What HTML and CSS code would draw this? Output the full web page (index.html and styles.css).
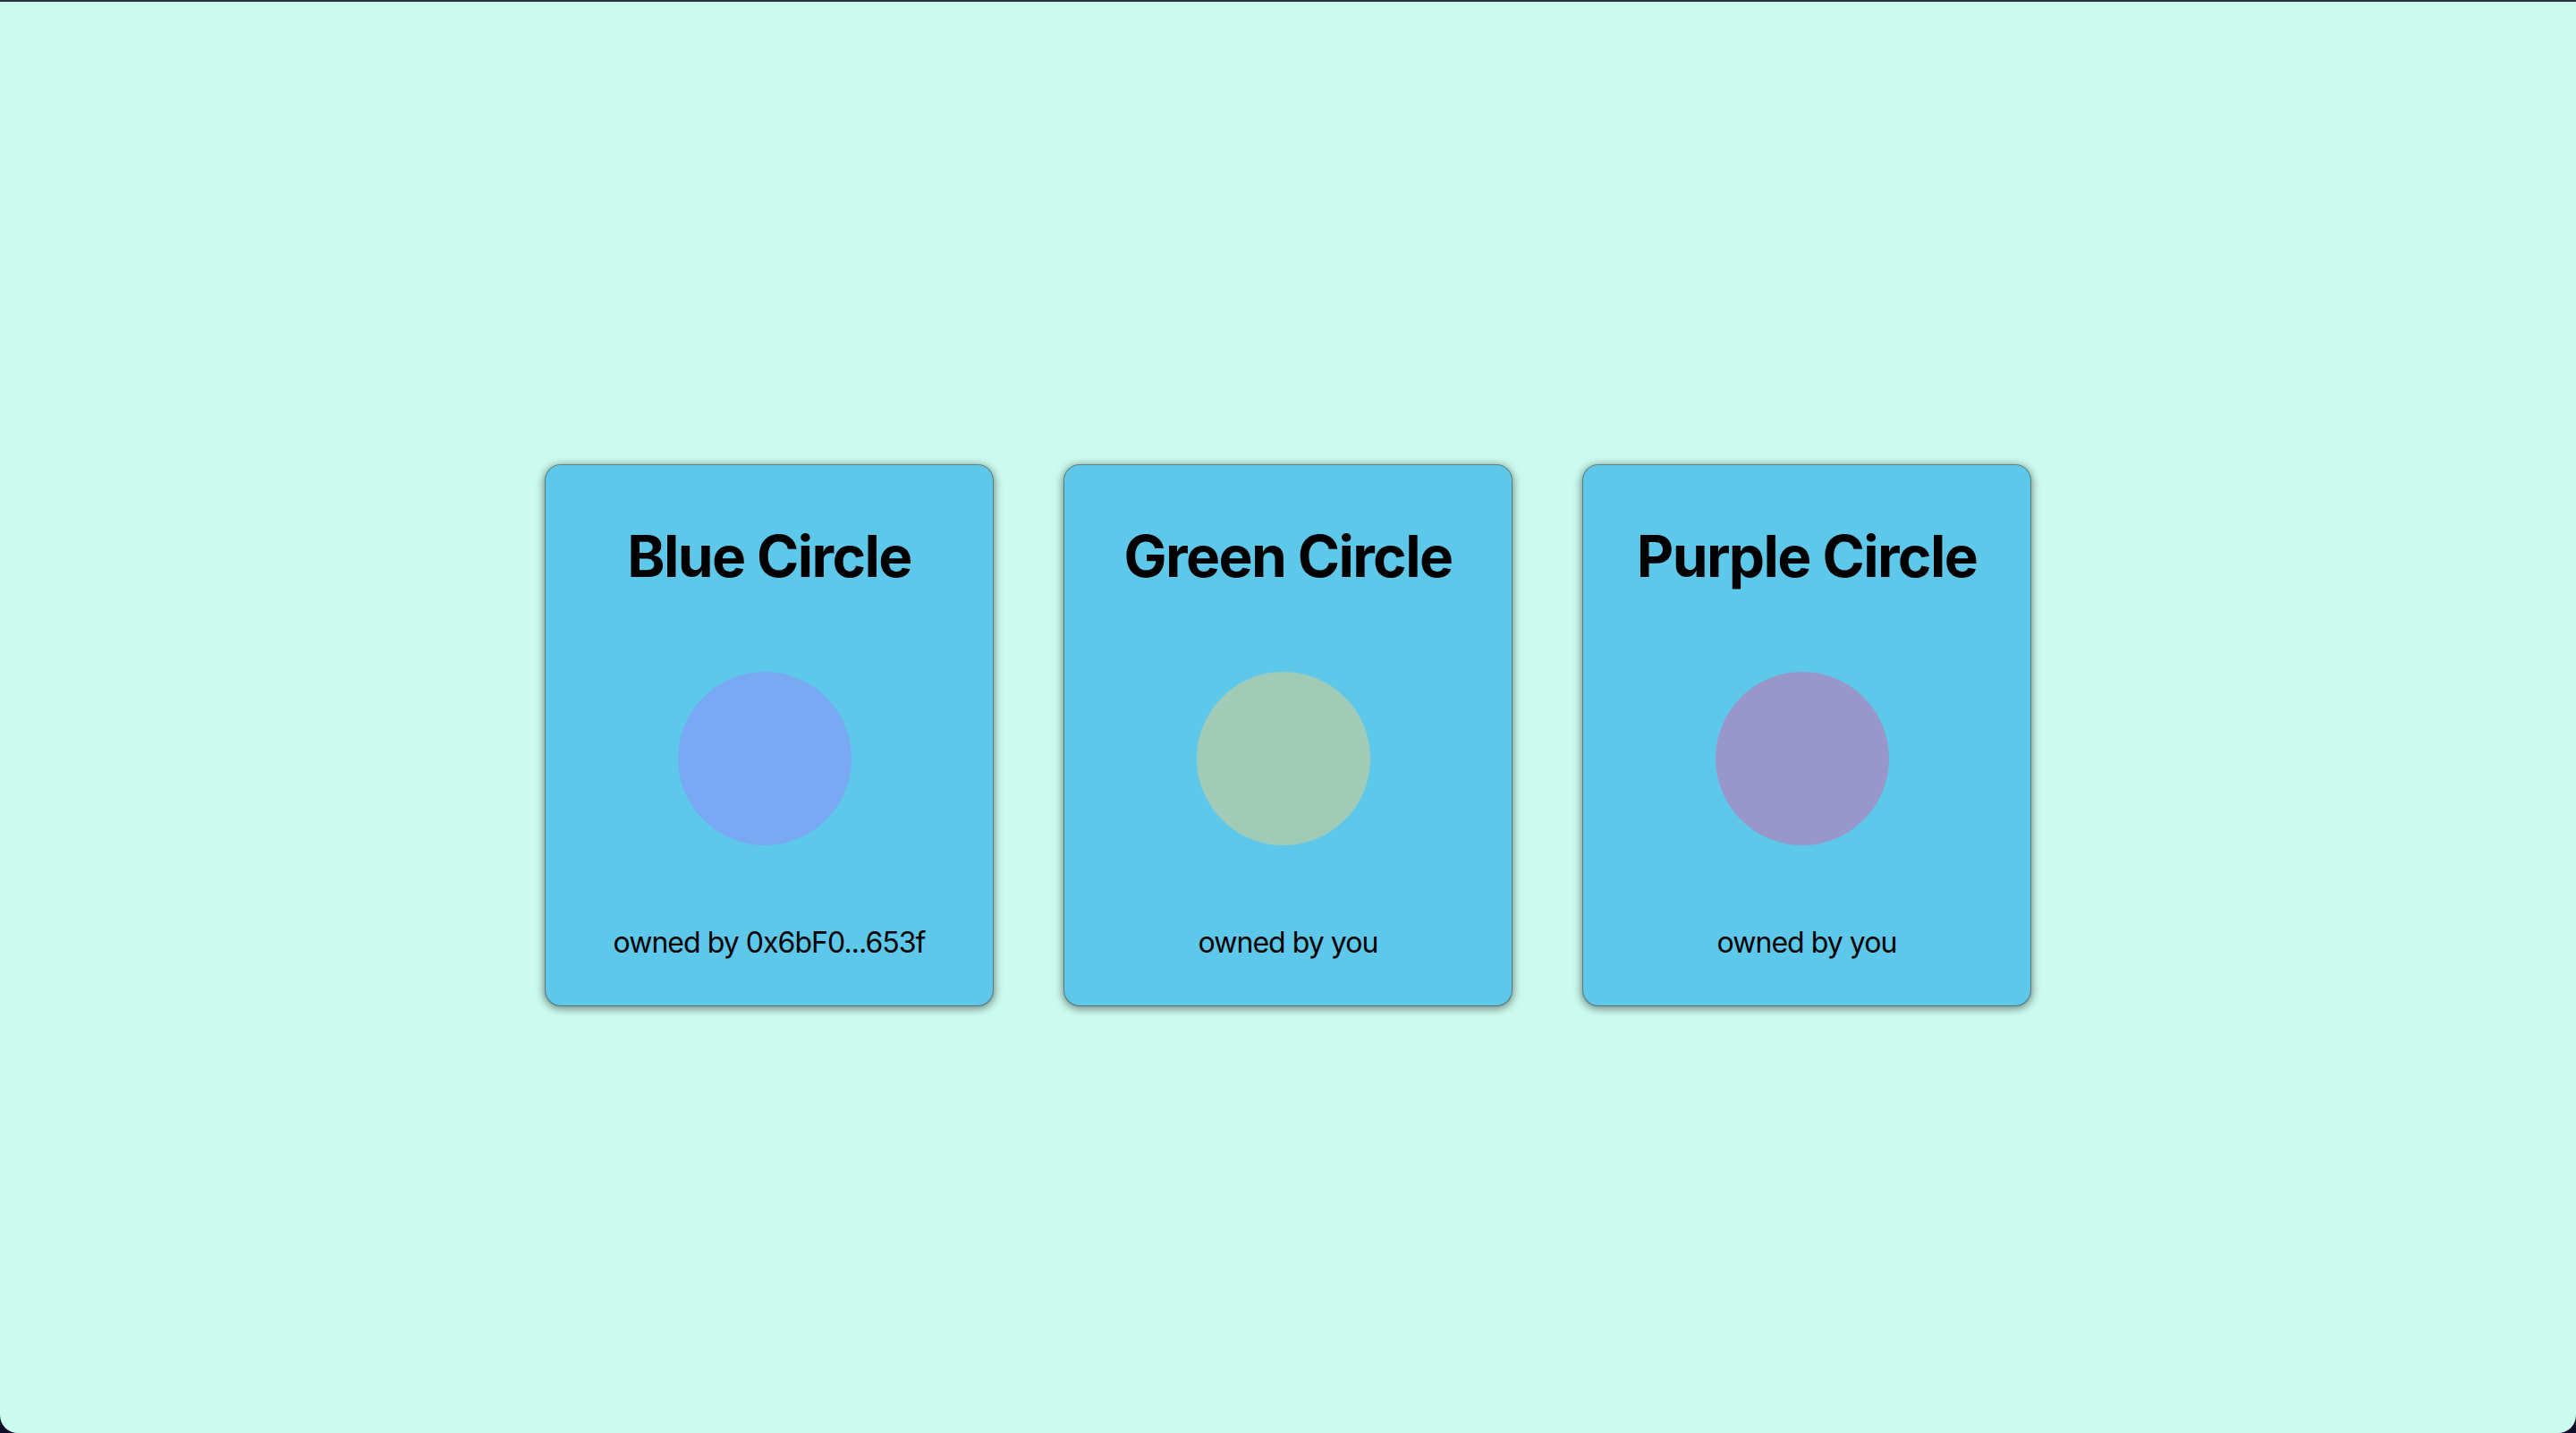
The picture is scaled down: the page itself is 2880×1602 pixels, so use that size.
FILE: index.html
```html
<!DOCTYPE html>
<html lang="en">
<head>
<meta charset="utf-8">
<title>Circles</title>
<link rel="stylesheet" href="styles.css">
</head>
<body>
<main class="page">
  <div class="gallery">
    <div class="card">
      <h2 class="card-title">Blue Circle</h2>
      <div class="circle circle-blue"></div>
      <p class="owner">owned by 0x6bF0...653f</p>
    </div>
    <div class="card">
      <h2 class="card-title">Green Circle</h2>
      <div class="circle circle-green"></div>
      <p class="owner">owned by you</p>
    </div>
    <div class="card">
      <h2 class="card-title">Purple Circle</h2>
      <div class="circle circle-purple"></div>
      <p class="owner">owned by you</p>
    </div>
  </div>
</main>
</body>
</html>
```

FILE: styles.css
```css
html {
  margin: 0;
  padding: 0;
  background: #0e0d2a;
  height: 100%;
}

body {
  margin: 0;
  padding: 0;
  font-family: Inter, "Liberation Sans", sans-serif;
  color: #000;
  border-top: 2px solid #2c3040;
}

.page {
  box-sizing: border-box;
  height: 1600px;
  background: #ccfbee;
  border-radius: 0 0 20px 20px;
  display: flex;
  justify-content: center;
  padding-top: 518px;
}

.gallery {
  display: flex;
  gap: 80px;
  align-items: flex-start;
}

.card {
  box-sizing: border-box;
  width: 500px;
  height: 604px;
  background: #5dc8ea;
  border-radius: 17px;
  box-shadow: 0 0 0 1px rgba(50, 70, 80, 0.55), 0 2px 10px 2px rgba(0, 0, 0, 0.45);
  padding: 63px 0 50px;
  display: flex;
  flex-direction: column;
  justify-content: space-between;
  align-items: center;
}

.card-title {
  margin: 0;
  font-size: 64px;
  font-weight: 700;
  letter-spacing: -0.025em;
  line-height: 1.21;
  text-align: center;
}

.circle {
  width: 194px;
  height: 194px;
  border-radius: 50%;
  margin-right: 11px;
  flex: none;
}

.circle-blue { background: #78a9f2; }
.circle-green { background: #a2cbb7; }
.circle-purple { background: #9797ca; }

.owner {
  margin: 0;
  font-size: 32px;
  font-weight: 400;
  letter-spacing: -0.03em;
  line-height: 1.21;
  text-align: center;
}
```
